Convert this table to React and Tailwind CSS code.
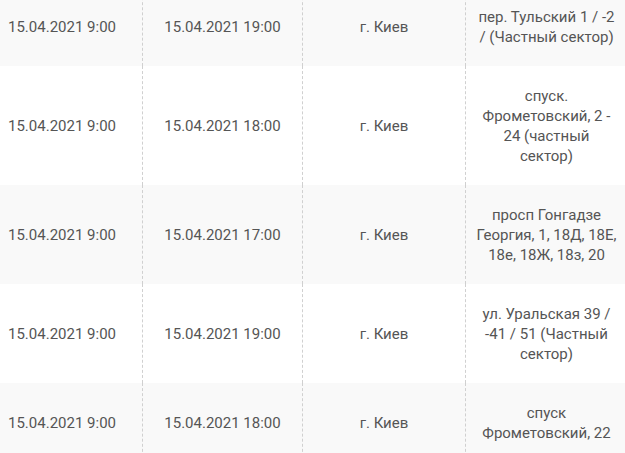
import React from "react";

const rows = [
  ["15.04.2021 9:00", "15.04.2021 19:00", "г. Киев", ["пер. Тульский 1 / -2", "/ (Частный сектор)"], true],
  ["15.04.2021 9:00", "15.04.2021 18:00", "г. Киев", ["спуск.", "Фрометовский, 2 -", "24 (частный", "сектор)"], false],
  ["15.04.2021 9:00", "15.04.2021 17:00", "г. Киев", ["просп Гонгадзе", "Георгия, 1, 18Д, 18Е,", "18е, 18Ж, 18з, 20"], true],
  ["15.04.2021 9:00", "15.04.2021 19:00", "г. Киев", ["ул. Уральская 39 /", "-41 / 51 (Частный", "сектор)"], false],
  ["15.04.2021 9:00", "15.04.2021 18:00", "г. Киев", ["спуск", "Фрометовский, 22"], true],
];

export default function App() {
  return (
    <div
      className="w-[625px] h-[453px] overflow-hidden bg-white text-[#555555] text-[15px] leading-[20px]"
      style={{ fontFamily: "Roboto, 'Noto Sans', sans-serif" }}
    >
      <div className="-mt-[13px] flex flex-col">
        {rows.map((r, i) => (
          <div
            key={i}
            className={`grid grid-cols-[142px_160px_163px_160px] ${r[4] ? "bg-[#f9f9f9]" : "bg-white"}`}
          >
            <div className="flex items-center pl-[8px] py-[19.5px]">{r[0]}</div>
            <div className="flex items-center justify-center border-l border-dashed border-[#d0d0d0] py-[19.5px]">{r[1]}</div>
            <div className="flex items-center justify-center border-l border-dashed border-[#d0d0d0] py-[19.5px]">{r[2]}</div>
            <div className="flex flex-col items-center justify-center text-center border-l border-dashed border-[#d0d0d0] py-[19.5px] pl-[2px]">
              {r[3].map((l, j) => (
                <div key={j} className="whitespace-nowrap">{l}</div>
              ))}
            </div>
          </div>
        ))}
      </div>
    </div>
  );
}
